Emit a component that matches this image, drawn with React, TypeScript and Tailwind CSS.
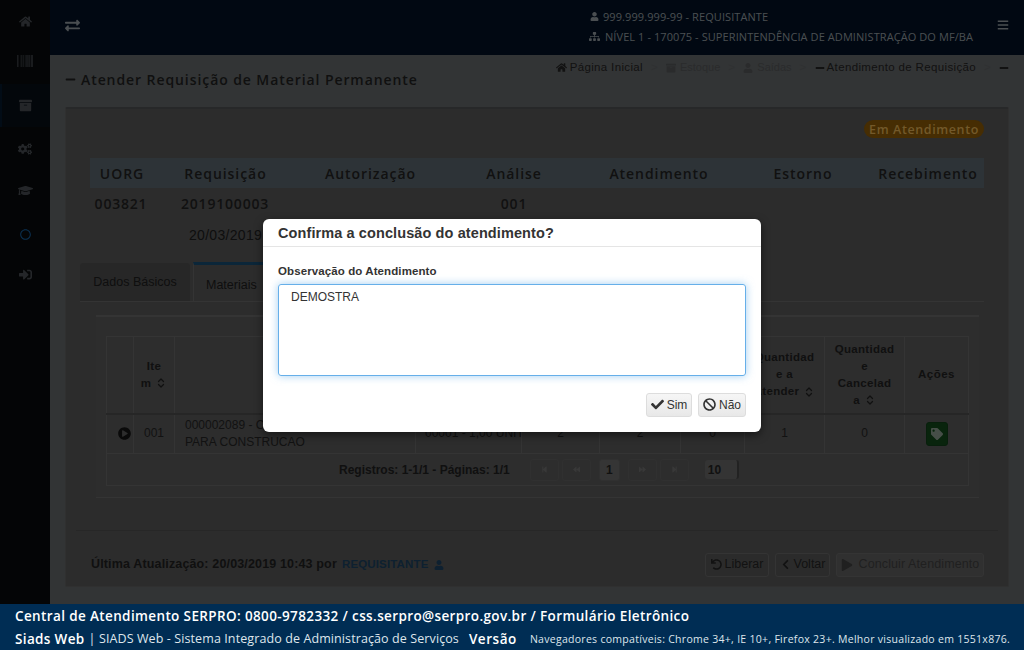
import React from "react";
import {
  FaHome, FaBarcode, FaArchive, FaCogs, FaGraduationCap, FaSignInAlt, FaExchangeAlt, FaUser, FaSitemap, FaBars,
  FaMinus, FaCheck, FaBan, FaUndo, FaChevronLeft, FaPlay, FaTag, FaPlayCircle, FaStepBackward, FaBackward, FaForward, FaStepForward,
  FaRegCircle,
} from "react-icons/fa";
import { ChevronsUpDown } from "lucide-react";

const sans = "font-['Liberation_Sans',Arial,sans-serif]";
const open = "font-['Open_Sans',sans-serif]";

function Sidebar() {
  return (
    <aside className="w-[50px] shrink-0 bg-[#0a0d0f] flex flex-col text-[#5a6066]">
      <div className="h-[43px] flex items-center justify-center"><FaHome className="text-[13px]" /></div>
      <div className="h-[41px] pt-[10px] flex justify-center items-start"><FaBarcode className="text-[16px]" /></div>
      <div className="h-[43px] flex items-center justify-center bg-[#08121c] border-l-2 border-[#052038] pr-[2px]"><FaArchive className="text-[13px]" /></div>
      <div className="h-[43px] flex items-center justify-center"><FaCogs className="text-[14px]" /></div>
      <div className="h-[40px] flex items-center justify-center"><FaGraduationCap className="text-[15px]" /></div>
      <div className="h-[48px] flex items-center justify-center"><FaRegCircle className="text-[11px] text-[#1b78c8]" /></div>
      <div className="h-[32px] flex items-center justify-center"><FaSignInAlt className="text-[13px]" /></div>
    </aside>
  );
}

function Header() {
  return (
    <header className="h-[55px] shrink-0 bg-[#03142d] flex items-center pl-[15px] pr-[15px] text-[#b8c3cb]">
      <FaExchangeAlt className="text-[15px] -mt-[5px]" />
      <div className={`ml-auto ${open} text-[11px] leading-[20px] tracking-[0.08px] -mt-[2px]`}>
        <div className="flex items-center gap-[3px]"><span className="w-[11px] flex justify-center"><FaUser className="text-[9px]" /></span><span>999.999.999-99 - REQUISITANTE</span></div>
        <div className="flex items-center gap-[5px]"><FaSitemap className="text-[11px]" /><span>NÍVEL 1 - 170075 - SUPERINTENDÊNCIA DE ADMINISTRAÇÃO DO MF/BA</span></div>
      </div>
      <FaBars className="ml-[24px] text-[12px] -mt-[5px]" />
    </header>
  );
}

function Breadcrumb() {
  const sep = <span className="text-[#76797c] w-[23px] text-center">&gt;</span>;
  return (
    <div className={`${sans} absolute right-[15px] top-[4px] flex items-center text-[11.5px] tracking-[0.35px] text-[#2e2e2e]`}>
      <FaHome className="text-[11px] mr-[3px]" />Página Inicial{sep}
      <span className="flex items-center text-[#696b6e] text-[11px] tracking-[0px]"><FaArchive className="text-[10px] mr-[4px]" />Estoque</span>{sep}
      <span className="flex items-center text-[#696b6e] text-[11px] tracking-[0px]"><FaUser className="text-[10px] mr-[4px]" />Saídas</span>{sep}
      <FaMinus className="text-[10px] mr-[2px]" />Atendimento de Requisição{sep}
      <FaMinus className="text-[10px]" />
    </div>
  );
}

const headers: [string, string][] = [
  ["UORG", "w-[64px]"], ["Requisição", "w-[143px]"], ["Autorização", "w-[147px]"], ["Análise", "w-[140px]"],
  ["Atendimento", "w-[150px]"], ["Estorno", "w-[138px]"], ["Recebimento", "flex-1"],
];

function StatusTable() {
  return (
    <div className={`${open} text-[#2b2b2b]`}>
      <div className="flex h-[30px] items-center bg-[#718089] font-semibold text-[14px] tracking-[0.95px]">
        {headers.map(([h, w]) => <div key={h} className={`${w} text-center`}>{h}</div>)}
      </div>
      <div className="flex h-[31px] items-center font-semibold text-[14px] tracking-[0.8px]">
        <div className="w-[62px] text-center">003821</div>
        <div className="w-[148px] pl-[29px]">2019100003</div>
        <div className="w-[144px]" />
        <div className="w-[140px] text-center">001</div>
      </div>
      <div className={`${sans} h-[33px] pl-[99px] flex items-center text-[14px] tracking-[0.3px] text-[#262626]`}>20/03/2019</div>
    </div>
  );
}

function SortHead({ a, b, c, d }: { a: string; b?: string; c?: string; d?: string }) {
  const lines = [a, b, c, d].filter(Boolean) as string[];
  return (
    <div className="leading-[17px]">
      {lines.map((l, i) => (
        <div key={i} className="flex items-center justify-center gap-[4px]">
          {l}{i === lines.length - 1 && <ChevronsUpDown size={12} strokeWidth={2.5} />}
        </div>
      ))}
    </div>
  );
}

function PageBtn({ children, active }: { children: React.ReactNode; active?: boolean }) {
  return (
    <span className={`h-[22px] rounded-[3px] flex items-center justify-center border ${active ? "w-[21px] bg-[#868686] border-[#787878] text-[#2b2b2b] text-[12px] font-bold" : "w-[29px] text-[7px] border-[#787878] text-[#8c8c8c]"}`}>
      {children}
    </span>
  );
}

function DataTable() {
  const cell = "border border-[#828282] text-center";
  return (
    <table className={`${sans} table-fixed border-collapse w-[862px] text-[12px] text-[#2e2e2e]`}>
      <colgroup>
        <col className="w-[27px]" /><col className="w-[41px]" /><col className="w-[241px]" /><col className="w-[106px]" />
        <col className="w-[78px]" /><col className="w-[81px]" /><col className="w-[64px]" /><col className="w-[80px]" />
        <col className="w-[80px]" /><col className="w-[64px]" />
      </colgroup>
      <thead>
        <tr className="h-[77px] border-b-2 border-[#5f5f5f] text-[11.5px] font-bold text-[#2a2a2a] tracking-[0.3px]">
          <th className={cell} />
          <th className={cell}><SortHead a="Ite" b="m" /></th>
          <th className={cell} /><th className={cell} /><th className={cell} /><th className={cell} /><th className={cell} />
          <th className={cell}><SortHead a="Quantidad" b="e a" c="Atender" /></th>
          <th className={cell}><SortHead a="Quantidad" b="e" c="Cancelad" d="a" /></th>
          <th className={`${cell} tracking-[0.5px]`}>Ações</th>
        </tr>
      </thead>
      <tbody>
        <tr className="h-[40px] leading-[17px]">
          <td className={cell}><FaPlayCircle className="text-[13px] text-[#191919] ml-[11px]" /></td>
          <td className={cell}>001</td>
          <td className={`${cell} !text-left pl-[10px]`}>000002089 - CIMENTO<br />PARA CONSTRUCAO</td>
          <td className={`${cell} !text-left pl-[9px] whitespace-nowrap overflow-hidden`}>00001 - 1,00 UNIT</td>
          <td className={cell}>2</td>
          <td className={cell}>2</td>
          <td className={cell}>0</td>
          <td className={cell}>1</td>
          <td className={cell}>0</td>
          <td className={cell}>
            <span className="inline-flex w-[22px] h-[24px] rounded-[3px] bg-[#175a22] border border-[#144f1e] items-center justify-center align-middle">
              <FaTag className="text-[12px] text-[#b0c4b5]" />
            </span>
          </td>
        </tr>
        <tr className="h-[32px]">
          <td colSpan={10} className="border border-[#828282]">
            <div className="flex items-center pl-[232px] gap-[3px]">
              <span className="font-bold text-[#2a2a2a] mr-[17px]">Registros: 1-1/1 - Páginas: 1/1</span>
              <PageBtn><FaStepBackward /></PageBtn>
              <PageBtn><FaBackward /></PageBtn>
              <span className="w-[2px]" />
              <PageBtn active>1</PageBtn>
              <span className="w-[2px]" />
              <PageBtn><FaForward /></PageBtn>
              <PageBtn><FaStepForward /></PageBtn>
              <span className="ml-[13px] w-[34px] h-[19px] rounded-[3px] border-r-2 border-[#555] bg-[#828282] font-bold text-[#2b2b2b] flex items-center pl-[3px]">10</span>
            </div>
          </td>
        </tr>
      </tbody>
    </table>
  );
}

function Panel() {
  return (
    <section className="mx-[15px] mt-[4px] h-[480px] bg-[#6e6e6e] border-t-2 border-[#626466] border-x border-b border-x-[#787878] border-b-[#787878] rounded-[2px] pl-[14px] pr-[24px]">
      <div className="h-[49px] pt-[11px] flex justify-end">
        <span className={`${open} relative z-20 h-[18px] w-[120px] pt-[2px] rounded-full bg-[#462d03] text-[#73592a] text-[12.5px] font-semibold tracking-[0.6px] flex items-center justify-center`}>Em Atendimento</span>
      </div>
      <div className="ml-[10px]"><StatusTable /></div>
      <div className="flex h-[38px] mt-[12px] border-b border-[#828282] items-end">
        <div className={`${sans} w-[110px] h-[38px] rounded-t-[3px] bg-[#626262] text-[12.5px] text-[#262626] flex items-center justify-center`}>Dados Básicos</div>
        <div className={`${sans} ml-[3px] w-[80px] h-[39px] border-t-[3px] border-[#1c5f8e] border-x border-x-[#828282] bg-[#6e6e6e] text-[12.5px] text-[#262626] pl-[12px] pt-[11px]`}>Materiais</div>
      </div>
      <div className="ml-[16px] mr-[5px] mt-[13px] h-[183px] bg-[#707070] border-t-2 border-[#626262] border-b border-[#828282] pl-[10px] pt-[19px]">
        <DataTable />
      </div>
      <div className="mt-[32px] -ml-[4px] -mr-[14px] border-t border-[#626262] pl-[15px] pr-[14px] pt-[13px] flex items-center h-[55px]">
        <span className={`${sans} font-bold text-[12.5px] text-[#2a2a2a] tracking-[0.15px]`}>Última Atualização: 20/03/2019 10:43 por</span>
        <span className={`${sans} ml-[5px] font-bold text-[11.5px] tracking-[0.15px] text-[#235278] flex items-center gap-[5px]`}>REQUISITANTE <FaUser className="text-[10px]" /></span>
        <div className={`${sans} ml-auto flex gap-[6px] text-[12.5px]`}>
          <span className="h-[24px] w-[64px] border border-[#828282] rounded-[3px] bg-[#6c6c6c] text-[#2e2e2e] flex items-center justify-center gap-[3px]"><FaUndo className="text-[11px]" />Liberar</span>
          <span className="h-[24px] w-[55px] border border-[#828282] rounded-[3px] bg-[#6c6c6c] text-[#2e2e2e] flex items-center justify-center gap-[3px]"><FaChevronLeft className="text-[11px]" />Voltar</span>
          <span className="h-[24px] w-[148px] border border-[#828282] rounded-[3px] bg-[#787878] text-[#505050] tracking-[0.1px] flex items-center justify-center gap-[6px]"><FaPlay className="text-[12px]" />Concluir Atendimento</span>
        </div>
      </div>
    </section>
  );
}

function Dialog() {
  return (
    <div role="dialog" className={`${sans} absolute z-30 left-[263px] top-[219px] w-[498px] h-[213px] bg-white rounded-[6px] shadow-[0_3px_9px_rgba(0,0,0,0.5)]`}>
      <div className="h-[28px] border-b border-[#e5e5e5] px-[15px] pt-[2px] flex items-center text-[14.5px] tracking-[0.1px] font-bold text-[#333]">Confirma a conclusão do atendimento?</div>
      <div className="px-[15px]">
        <label className="block mt-[16px] h-[21px] text-[11.5px] font-bold text-[#333] tracking-[0.1px]">Observação do Atendimento</label>
        <div className="h-[92px] rounded-[3px] border border-[#66afe9] shadow-[0_0_8px_rgba(102,175,233,0.6)] px-[12px] py-[3px] text-[12px] text-[#333]">DEMOSTRA</div>
        <div className="mt-[17px] flex justify-end gap-[6px] text-[12px] text-[#333]">
          <span className="h-[24px] w-[46px] rounded-[3px] bg-gradient-to-b from-[#f6f6f6] to-[#e8e8e8] border border-[#ddd] flex items-center justify-center gap-[3px]"><FaCheck className="text-[13px] -mt-[1px]" />Sim</span>
          <span className="h-[24px] w-[48px] rounded-[3px] bg-gradient-to-b from-[#f6f6f6] to-[#e8e8e8] border border-[#ddd] flex items-center justify-center gap-[3px]"><FaBan className="text-[13px] -mt-[2px]" />Não</span>
        </div>
      </div>
    </div>
  );
}

function Footer() {
  return (
    <footer className={`${open} relative z-20 h-[46px] shrink-0 bg-[#002d54] text-white pl-[15px] pr-[15px]`}>
      <div className="h-[24px] pt-[1px] flex items-center text-[13.5px] font-semibold tracking-[0.375px]">Central de Atendimento SERPRO: 0800-9782332 / css.serpro@serpro.gov.br / Formulário Eletrônico</div>
      <div className="h-[22px] pt-[1px] flex items-center whitespace-nowrap">
        <span className="text-[13.5px] font-semibold tracking-[0.35px]">Siads Web</span>
        <span className="text-[12.5px] ml-[4px] tracking-[0.1px] text-[#dfe6ec]">| SIADS Web - Sistema Integrado de Administração de Serviços</span>
        <span className="text-[13.5px] font-semibold tracking-[0.55px] ml-[10px]">Versão</span>
        <span className="text-[10.5px] ml-[13px] tracking-[0.29px] text-[#dfe6ec]">Navegadores compatíveis: Chrome 34+, IE 10+, Firefox 23+. Melhor visualizado em 1551x876.</span>
      </div>
    </footer>
  );
}

export default function App() {
  return (
    <div className="relative w-[1024px] h-[650px] overflow-hidden flex flex-col bg-[#7d8284]">
      <div className="flex h-[604px]">
        <Sidebar />
        <main className="flex-1 flex flex-col min-w-0">
          <Header />
          <div className="relative flex-1">
            <Breadcrumb />
            <div className={`${open} h-[48px] pl-[15px] flex items-center gap-[5px] text-[14px] font-semibold tracking-[0.92px] text-[#2a2a2a]`}>
              <FaMinus className="text-[11px]" />Atender Requisição de Material Permanente
            </div>
            <Panel />
          </div>
        </main>
      </div>
      <Footer />
      <div className="absolute inset-0 z-10 bg-black/60" />
      <Dialog />
    </div>
  );
}
